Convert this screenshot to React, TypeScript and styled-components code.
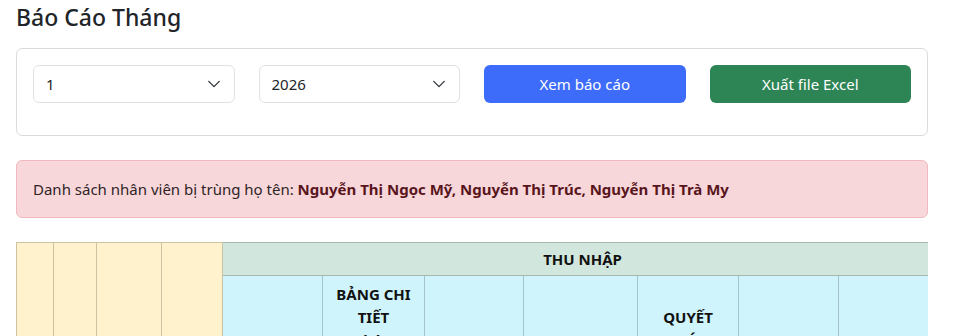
import React from "react";
import styled, { createGlobalStyle } from "styled-components";

const GlobalStyle = createGlobalStyle`
  * { box-sizing: border-box; }
  body {
    margin: 0;
    background: #fff;
    font-family: "Noto Sans", "Open Sans", sans-serif;
    font-size: 15px;
    line-height: 1.5;
    color: #212529;
  }
`;

const months = Array.from({ length: 12 }, (_, i) => String(i + 1));
const years = ["2024", "2025", "2026"];

const subColumns = [
  { w: 100, text: ["TỔNG", "THU NHẬP"] },
  { w: 102, text: ["BẢNG CHI", "TIẾT", "LƯƠNG", "THEO", "HỢP", "ĐỒNG", "LAO ĐỘNG"] },
  { w: 99, text: ["THƯỞNG"] },
  { w: 114, text: ["PHỤ CẤP"] },
  { w: 101, text: ["QUYẾT", "TOÁN", "THUẾ", "TNCN", "NĂM"] },
  { w: 100, text: ["TRUY THU"] },
  { w: 104, text: ["KHÁC"] },
];

const leftColumns = [
  { w: 37, text: "STT" },
  { w: 43, text: "MÃ" },
  { w: 65, text: "HỌ TÊN" },
  { w: 61, text: "MST" },
];

const App: React.FC = () => {
  return (
    <Page>
      <GlobalStyle />
      <Title>Báo Cáo Tháng</Title>
      <Card>
        <FilterRow>
          <SelectWrap>
            <Select defaultValue="1">
              {months.map((m) => (
                <option key={m}>{m}</option>
              ))}
            </Select>
            <Chevron viewBox="0 0 16 16">
              <path d="M2 5l6 6 6-6" />
            </Chevron>
          </SelectWrap>
          <SelectWrap>
            <Select defaultValue="2026">
              {years.map((y) => (
                <option key={y}>{y}</option>
              ))}
            </Select>
            <Chevron viewBox="0 0 16 16">
              <path d="M2 5l6 6 6-6" />
            </Chevron>
          </SelectWrap>
          <Button $bg="#3d6cfa">Xem báo cáo</Button>
          <Button $bg="#2d8556">Xuất file Excel</Button>
        </FilterRow>
      </Card>
      <Alert>
        Danh sách nhân viên bị trùng họ tên:{" "}
        <strong>Nguyễn Thị Ngọc Mỹ, Nguyễn Thị Trúc, Nguyễn Thị Trà My</strong>
      </Alert>
      <TableScroll>
        <Table>
          <colgroup>
            {leftColumns.map((c) => (
              <col key={c.text} style={{ width: c.w }} />
            ))}
            {subColumns.map((c, i) => (
              <col key={i} style={{ width: c.w }} />
            ))}
          </colgroup>
          <thead>
            <tr>
              {leftColumns.map((c) => (
                <HeadCell key={c.text} rowSpan={2} $tone="warning" $nowrap>
                  {c.text}
                </HeadCell>
              ))}
              <GroupCell colSpan={subColumns.length} $tone="success">
                THU NHẬP
              </GroupCell>
            </tr>
            <tr>
              {subColumns.map((c, i) => (
                <HeadCell key={i} $tone="info">
                  {c.text.map((t, j) => (
                    <React.Fragment key={j}>
                      {j > 0 && <br />}
                      {t}
                    </React.Fragment>
                  ))}
                </HeadCell>
              ))}
            </tr>
          </thead>
        </Table>
      </TableScroll>
    </Page>
  );
};

export default App;

const tones = {
  warning: { bg: "#fff2cc", border: "#ccc2a4" },
  success: { bg: "#d1e7dd", border: "#a7b9b1" },
  info: { bg: "#cff4fc", border: "#a6c3ca" },
};

type Tone = keyof typeof tones;

const Page = styled.div`
  padding: 3px 25px 0 16px;
`;

const Title = styled.h4`
  margin: 0 0 16px;
  font-size: 23px;
  font-weight: 500;
  line-height: 29px;
  color: #212529;
`;

const Card = styled.div`
  border: 1px solid #d9dcdf;
  border-radius: 6px;
  padding: 16px 16px 0;
  margin-bottom: 24px;
`;

const FilterRow = styled.div`
  display: grid;
  grid-template-columns: repeat(4, 1fr);
  column-gap: 24px;
  padding-bottom: 32px;
`;

const SelectWrap = styled.div`
  position: relative;
`;

const Select = styled.select`
  appearance: none;
  width: 100%;
  height: 38px;
  padding: 0 36px 0 12px;
  font-family: inherit;
  font-size: 15px;
  color: #212529;
  background: #fff;
  border: 1px solid #dee2e6;
  border-radius: 6px;
  outline: none;
`;

const Chevron = styled.svg`
  position: absolute;
  right: 14px;
  top: 12px;
  width: 14px;
  height: 14px;
  fill: none;
  stroke: #343a40;
  stroke-width: 1.6;
  stroke-linecap: round;
  stroke-linejoin: round;
  pointer-events: none;
`;

const Button = styled.button<{ $bg: string }>`
  height: 38px;
  border: none;
  border-radius: 6px;
  background: ${(p) => p.$bg};
  color: #fff;
  font-family: inherit;
  font-size: 15px;
`;

const Alert = styled.div`
  background: #f8d7da;
  border: 1px solid #f1b9bf;
  border-radius: 6px;
  padding: 16px;
  margin-bottom: 24px;
  color: #2e2426;
  line-height: 24px;

  strong {
    color: #58151c;
    font-weight: 700;
  }
`;

const TableScroll = styled.div`
  overflow: hidden;
`;

const Table = styled.table`
  border-collapse: collapse;
  table-layout: fixed;
  width: 826px;
`;

const HeadCell = styled.th<{ $tone: Tone; $nowrap?: boolean }>`
  background: ${(p) => tones[p.$tone].bg};
  border: 1px solid ${(p) => tones[p.$tone].border};
  padding: 7px 4px;
  font-size: 15px;
  font-weight: 700;
  line-height: 23px;
  text-align: center;
  vertical-align: middle;
  color: #111;
  white-space: ${(p) => (p.$nowrap ? "nowrap" : "normal")};
  overflow: hidden;
`;

const GroupCell = styled(HeadCell)`
  height: 33px;
  padding: 4px;
  line-height: 24px;
`;
